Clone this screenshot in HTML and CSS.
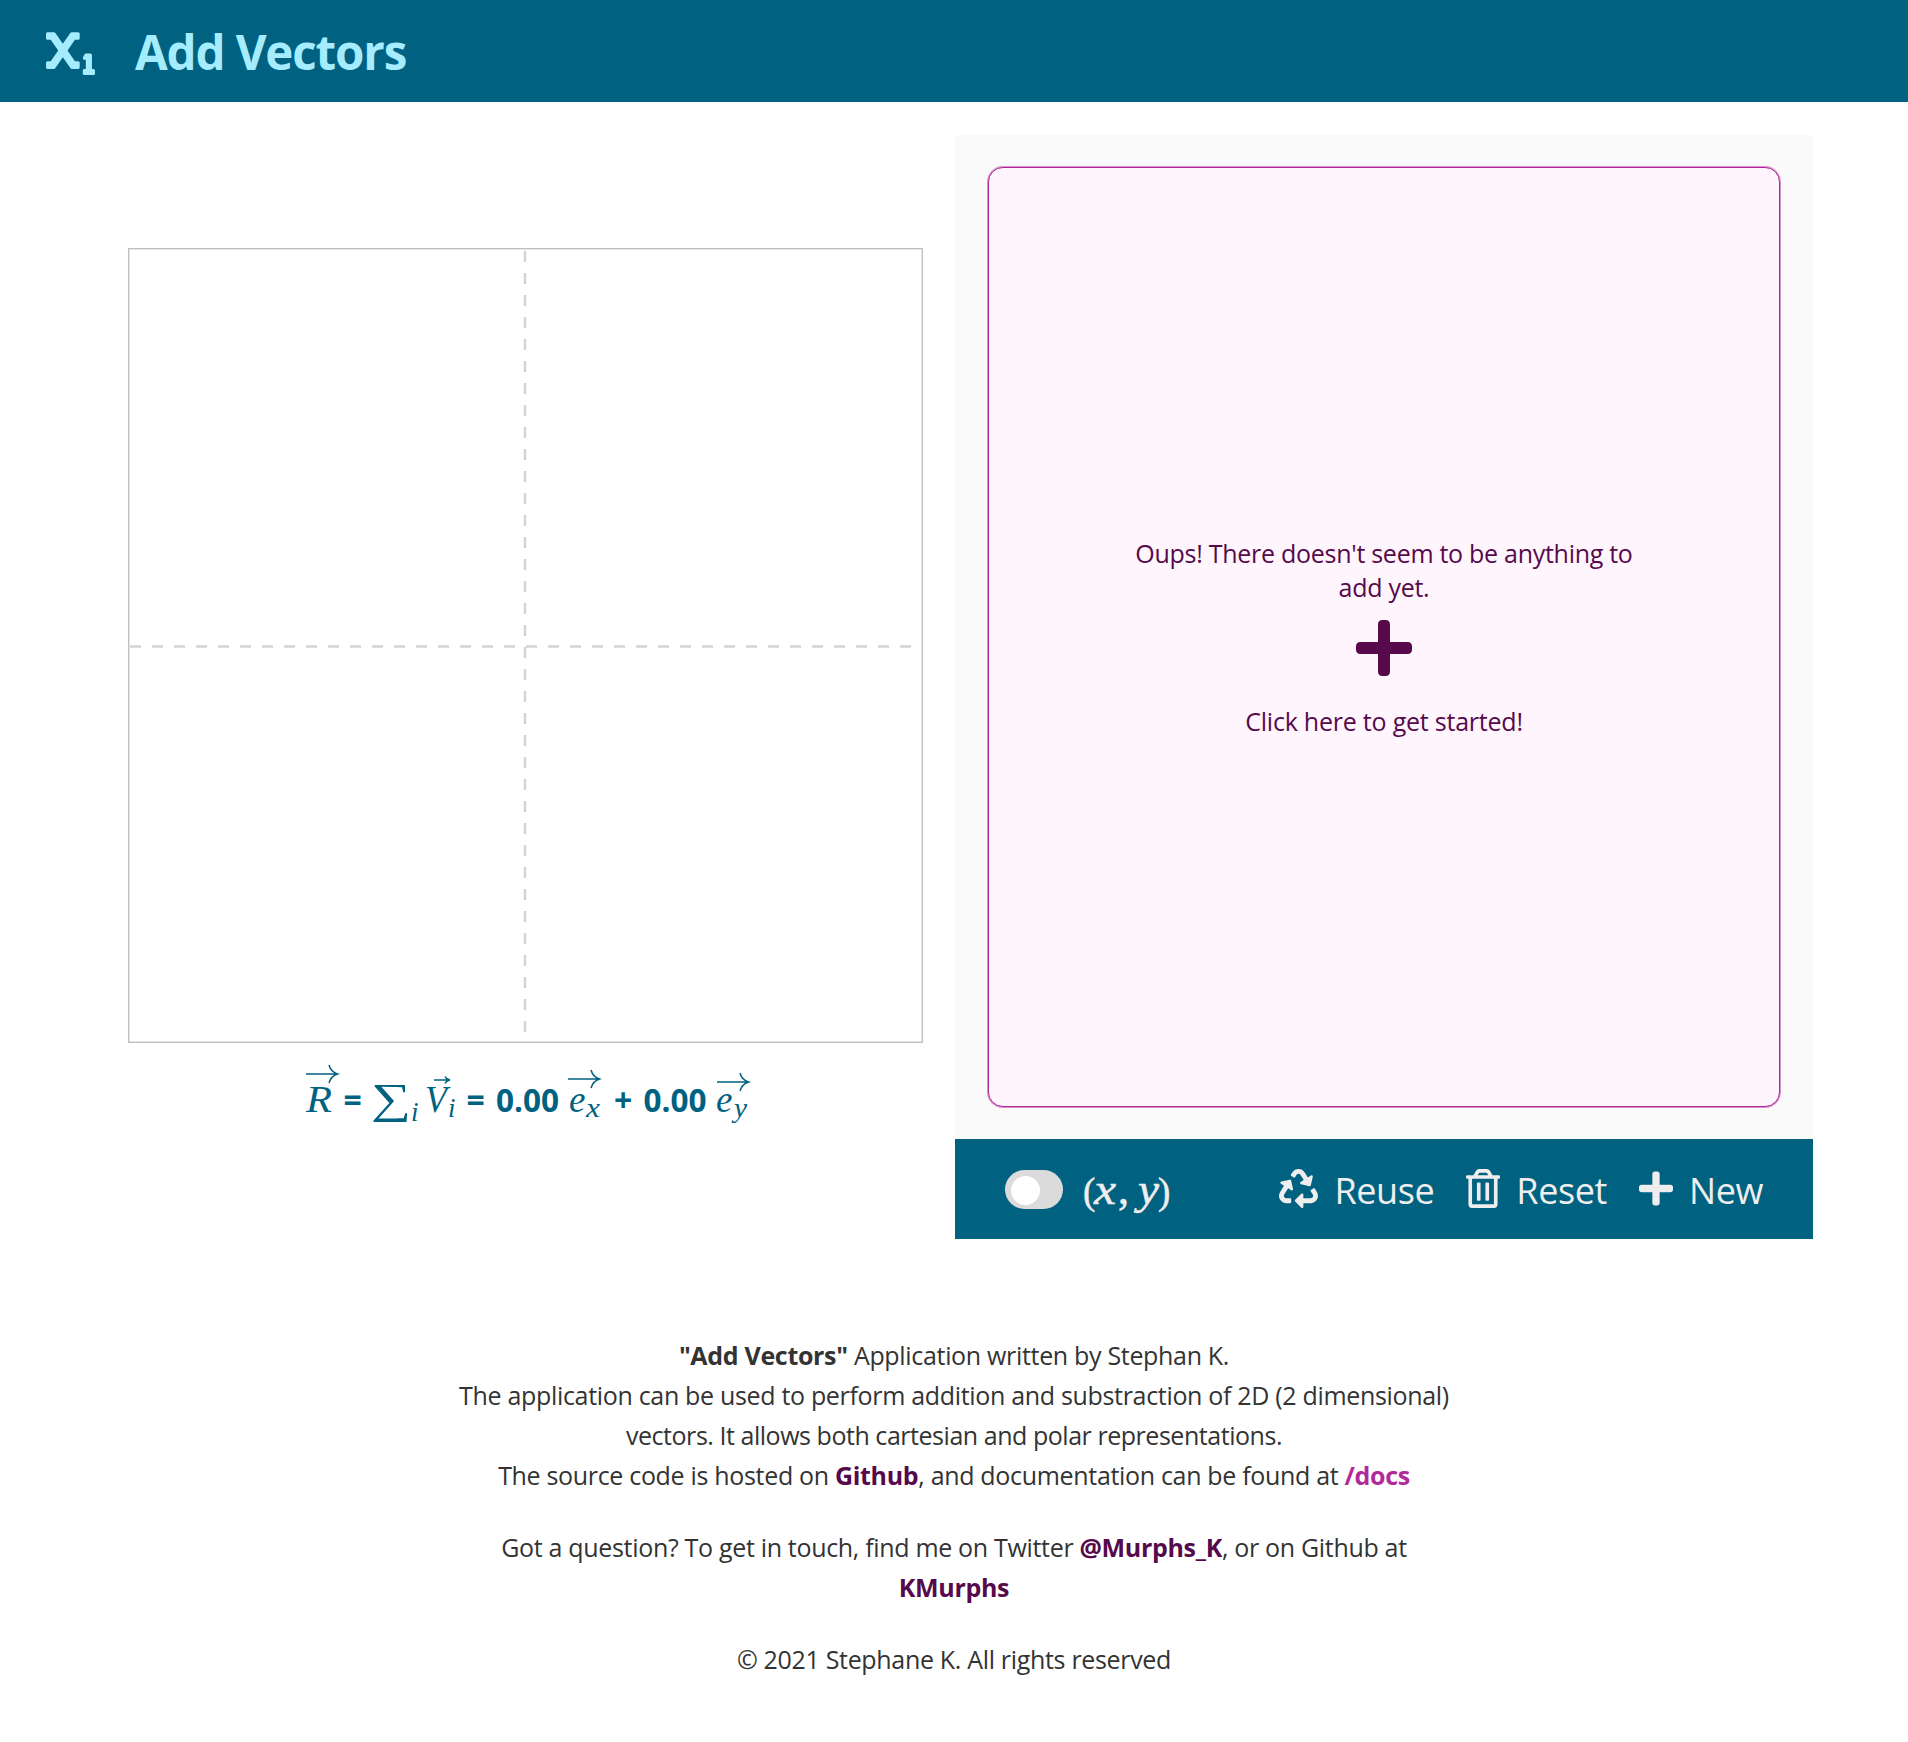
FILE: index.html
```html
<!DOCTYPE html>
<html lang="en">
<head>
<meta charset="utf-8">
<title>Add Vectors</title>
<link rel="stylesheet" href="styles.css">
</head>
<body>
<header class="header">
  <svg class="logo" viewBox="0 0 512 512"><path d="M496 448h-16V304a16 16 0 0 0-16-16h-48a16 16 0 0 0-14.29 8.83l-16 32A16 16 0 0 0 400 352h16v96h-16a16 16 0 0 0-16 16v32a16 16 0 0 0 16 16h96a16 16 0 0 0 16-16v-32a16 16 0 0 0-16-16zM336 64h-67a16 16 0 0 0-13.14 6.87l-79.9 115-79.9-115A16 16 0 0 0 83 64H16A16 16 0 0 0 0 80v48a16 16 0 0 0 16 16h33.48l77.81 112-77.81 112H16a16 16 0 0 0-16 16v48a16 16 0 0 0 16 16h67a16 16 0 0 0 13.14-6.87l79.9-115 79.9 115A16 16 0 0 0 269 448h67a16 16 0 0 0 16-16v-48a16 16 0 0 0-16-16h-33.48l-77.81-112 77.81-112H336a16 16 0 0 0 16-16V80a16 16 0 0 0-16-16z"/></svg>
  <h1 class="title">Add Vectors</h1>
</header>
<main class="main">
  <section class="plot">
    <svg class="canvas" viewBox="0 0 795 795">
      <rect class="frame" x=".7" y=".7" width="793.6" height="793.6"/>
      <path class="axis" d="M397 3V793M2 398.5H793"/>
    </svg>
    <div class="formula">
      <svg class="math" viewBox="0 0 460 72">
        <g class="arrow">
          <path d="M8 16H39M31 7q2 7 8.500 9q-6.500 2-8.500 9"/>
          <path d="M136 22H152M147 18.500q1.500 3 5 3.500q-3.500.500-5 3.500"/>
          <path d="M270 21H302M293 12q2 7 8.500 9q-6.500 2-8.500 9"/>
          <path d="M419 24H450M442 15q2 7 8.500 9q-6.500 2-8.500 9"/>
        </g>
        <g class="symbol">
          <text x="8" y="53.700" textLength="26" lengthAdjust="spacingAndGlyphs">R</text>
          <text class="sum" x="73" y="54.500" textLength="40" lengthAdjust="spacingAndGlyphs">∑</text>
          <text class="sub" x="113" y="63">i</text>
          <text x="127" y="53.700" textLength="22" lengthAdjust="spacingAndGlyphs">V</text>
          <text class="sub" x="150" y="59">i</text>
          <text x="271" y="53.700">e</text>
          <text class="sub" x="288" y="59" textLength="14" lengthAdjust="spacingAndGlyphs">x</text>
          <text x="418" y="53.700">e</text>
          <text class="sub" x="436" y="59" textLength="13" lengthAdjust="spacingAndGlyphs">y</text>
        </g>
        <g class="number">
          <text x="45.500" y="54">=</text>
          <text x="168.500" y="54">=</text>
          <text x="198" y="54" textLength="63" lengthAdjust="spacingAndGlyphs">0.00</text>
          <text x="316" y="54">+</text>
          <text x="345.500" y="54" textLength="63" lengthAdjust="spacingAndGlyphs">0.00</text>
        </g>
      </svg>
    </div>
  </section>
  <section class="panel">
    <div class="list">
      <div class="empty">
        <p class="hint">Oups! There doesn't seem to be anything to<br>add yet.</p>
        <svg class="plus" viewBox="0 0 448 512"><path d="M416 208H272V64c0-17.67-14.33-32-32-32h-32c-17.67 0-32 14.33-32 32v144H32c-17.67 0-32 14.33-32 32v32c0 17.670 14.330 32 32 32h144v144c0 17.670 14.330 32 32 32h32c17.670 0 32-14.330 32-32V304h144c17.670 0 32-14.330 32-32v-32c0-17.670-14.330-32-32-32z"/></svg>
        <p class="hint start">Click here to get started!</p>
      </div>
    </div>
    <div class="toolbar">
      <span class="switch"></span>
      <svg class="coords" viewBox="0 0 90 60">
        <text class="paren" x="0" y="44.500">(</text>
        <text x="11" y="45" textLength="22" lengthAdjust="spacingAndGlyphs">x</text>
        <text class="comma" x="35" y="45">,</text>
        <text x="55" y="45" textLength="21" lengthAdjust="spacingAndGlyphs">y</text>
        <text class="paren" x="75" y="44.500">)</text>
      </svg>
      <div class="action reuse"><svg class="icon recycle" viewBox="0 0 512 512"><path d="M184.561 261.903c3.232 13.997-12.123 24.635-24.068 17.168l-40.736-25.455-50.867 81.402C55.606 356.273 70.960 384 96.012 384H148c6.627 0 12 5.373 12 12v40c0 6.627-5.373 12-12 12H96.115c-75.334 0-121.302-83.048-81.408-146.880l50.822-81.388-40.725-25.448c-12.081-7.547-8.966-25.961 4.879-29.158l110.237-25.450c8.611-1.988 17.201 3.381 19.189 11.990l25.452 110.237zm98.561-182.915l41.289 66.076-40.740 25.457c-12.051 7.528-9 25.953 4.879 29.158l110.237 25.450c8.672 1.999 17.215-3.438 19.189-11.990l25.450-110.237c3.197-13.844-11.990-24.719-24.068-17.168l-40.687 25.424-41.263-66.082c-37.521-60.033-125.209-60.171-162.816 0l-17.963 28.766c-3.510 5.620-1.800 13.021 3.820 16.533l33.919 21.195c5.620 3.512 13.024 1.803 16.536-3.817l17.961-28.743c12.712-20.341 41.973-19.676 54.257-.022zM497.288 301.120l-27.515-44.065c-3.511-5.623-10.916-7.334-16.538-3.821l-33.861 21.159c-5.620 3.512-7.330 10.915-3.818 16.536l27.564 44.112c13.257 21.211-2.057 48.960-27.136 48.960H320V336.020c0-14.213-17.242-21.383-27.313-11.313l-80 79.981c-6.249 6.248-6.249 16.379 0 22.627l80 79.989C302.689 517.308 320 510.300 320 495.989V448h95.880c75.274 0 121.335-82.997 81.408-146.880z"/></svg><span class="label">Reuse</span></div>
      <div class="action reset"><svg class="icon trash" viewBox="0 0 448 512"><path d="M268 416h24a12 12 0 0 0 12-12V188a12 12 0 0 0-12-12h-24a12 12 0 0 0-12 12v216a12 12 0 0 0 12 12zM432 80h-82.410l-34-56.700A48 48 0 0 0 274.410 0H173.590a48 48 0 0 0-41.160 23.300L98.410 80H16A16 16 0 0 0 0 96v16a16 16 0 0 0 16 16h16v336a48 48 0 0 0 48 48h288a48 48 0 0 0 48-48V128h16a16 16 0 0 0 16-16V96a16 16 0 0 0-16-16zM171.840 50.910A6 6 0 0 1 177 48h94a6 6 0 0 1 5.150 2.910L293.610 80H154.390zM368 464H80V128h288zm-212-48h24a12 12 0 0 0 12-12V188a12 12 0 0 0-12-12h-24a12 12 0 0 0-12 12v216a12 12 0 0 0 12 12z"/></svg><span class="label">Reset</span></div>
      <div class="action new"><svg class="icon add" viewBox="0 0 448 512"><path d="M416 208H272V64c0-17.67-14.33-32-32-32h-32c-17.67 0-32 14.33-32 32v144H32c-17.67 0-32 14.33-32 32v32c0 17.670 14.330 32 32 32h144v144c0 17.670 14.330 32 32 32h32c17.670 0 32-14.330 32-32V304h144c17.670 0 32-14.330 32-32v-32c0-17.670-14.330-32-32-32z"/></svg><span class="label">New</span></div>
    </div>
  </section>
</main>
<footer class="footer">
  <p><b>"Add Vectors"</b> Application written by Stephan K.<br>The application can be used to perform addition and substraction of 2D (2 dimensional)<br><span class="tight">vectors. It allows both cartesian and polar representations.</span><br>The source code is hosted on <a class="link">Github</a>, and documentation can be found at <a class="link docs">/docs</a></p>
  <p>Got a question? To get in touch, find me on Twitter <a class="link">@Murphs_K</a>, or on Github at<br><a class="link">KMurphs</a></p>
  <p>© 2021 Stephane K. All rights reserved</p>
</footer>
</body>
</html>
```
FILE: styles.css
```css
* { box-sizing: border-box; }
body { margin: 0; background: #fff; color: #333; font-family: "Open Sans", "Noto Sans", sans-serif; }
p, h1 { margin: 0; }
.header { display: flex; align-items: center; gap: 40px; height: 102px; padding-left: 46px; background: #006180; color: #a5ecff; }
.logo { width: 49px; height: 49px; margin-bottom: 1px; fill: currentColor; }
.title { padding-top: 2px; font-size: 47.500px; line-height: 64px; font-weight: 700; letter-spacing: -1.150px; }
.main { display: grid; grid-template-columns: 795px 858px; gap: 32px; padding: 32.500px 0 0 128px; height: 1137px; }
.plot { padding-top: 113.500px; }
.canvas { display: block; width: 795px; height: 795px; }
.frame { fill: none; stroke: #c0c0c0; stroke-width: 1.400; }
.axis { fill: none; stroke: #d3d3d3; stroke-width: 2.400; stroke-dasharray: 11 11; }
.formula { padding: 15px 0 0 170px; }
.math { display: block; width: 460px; height: 72px; color: #006180; fill: currentColor; }
.arrow { fill: none; stroke: currentColor; stroke-width: 1.500; }
.symbol { font: italic 37px "Liberation Serif", serif; }
.symbol .sub { font-size: 27px; }
.symbol .sum { font: normal 43px "Liberation Serif", serif; }
.number { font-weight: 700; font-size: 32px; }
.panel { display: flex; flex-direction: column; background: #fafafa; height: 1104.500px; }
.list { flex: 1; padding: 32.500px 33px 32px; display: flex; }
.empty { flex: 1; display: flex; flex-direction: column; align-items: center; border: 1px solid #b12a9a; border-radius: 15px; box-shadow: 0 0 0 1px rgba(177, 42, 154, .5); background: #fef5fd; color: #560a4b; padding-top: 368px; }
.hint { text-align: center; font-size: 25px; line-height: 34px; white-space: nowrap; letter-spacing: -.280px; }
.plus { width: 56px; height: 64px; margin-top: 12px; fill: currentColor; }
.start { margin-top: 24px; letter-spacing: -.220px; }
.toolbar { display: flex; align-items: center; height: 100px; padding: 0 50px; background: #006180; color: #eee; }
.switch { width: 58px; height: 39px; border-radius: 20px; background: #dbdbdb; padding: 6px; }
.switch::before { content: ""; display: block; width: 29px; height: 29px; border-radius: 50%; background: #fff; }
.coords { width: 90px; height: 60px; margin-left: 20px; fill: currentColor; stroke: currentColor; stroke-width: .5; font: italic 44px "Liberation Serif", serif; }
.coords .paren { font: normal 37px "Liberation Serif", serif; }
.coords .comma { font: normal 44px "Liberation Serif", serif; }
.action { display: flex; align-items: center; font-size: 36px; line-height: 50px; letter-spacing: -.400px; }
.label { padding-top: 4px; }
.icon { fill: currentColor; margin-bottom: 1px; }
.reuse { margin-left: auto; }
.recycle { width: 39px; height: 39px; margin-right: 16px; }
.reset, .new { margin-left: 32px; }
.trash, .add { width: 34px; height: 39px; margin-right: 16px; }
.footer { display: flex; flex-direction: column; gap: 32px; padding-top: 95.500px; text-align: center; font-size: 25px; line-height: 40px; white-space: nowrap; letter-spacing: -.320px; }
.tight { letter-spacing: -.460px; }
.link { font-weight: 700; color: #560a4b; }
.docs { color: #b12a9a; }
```
